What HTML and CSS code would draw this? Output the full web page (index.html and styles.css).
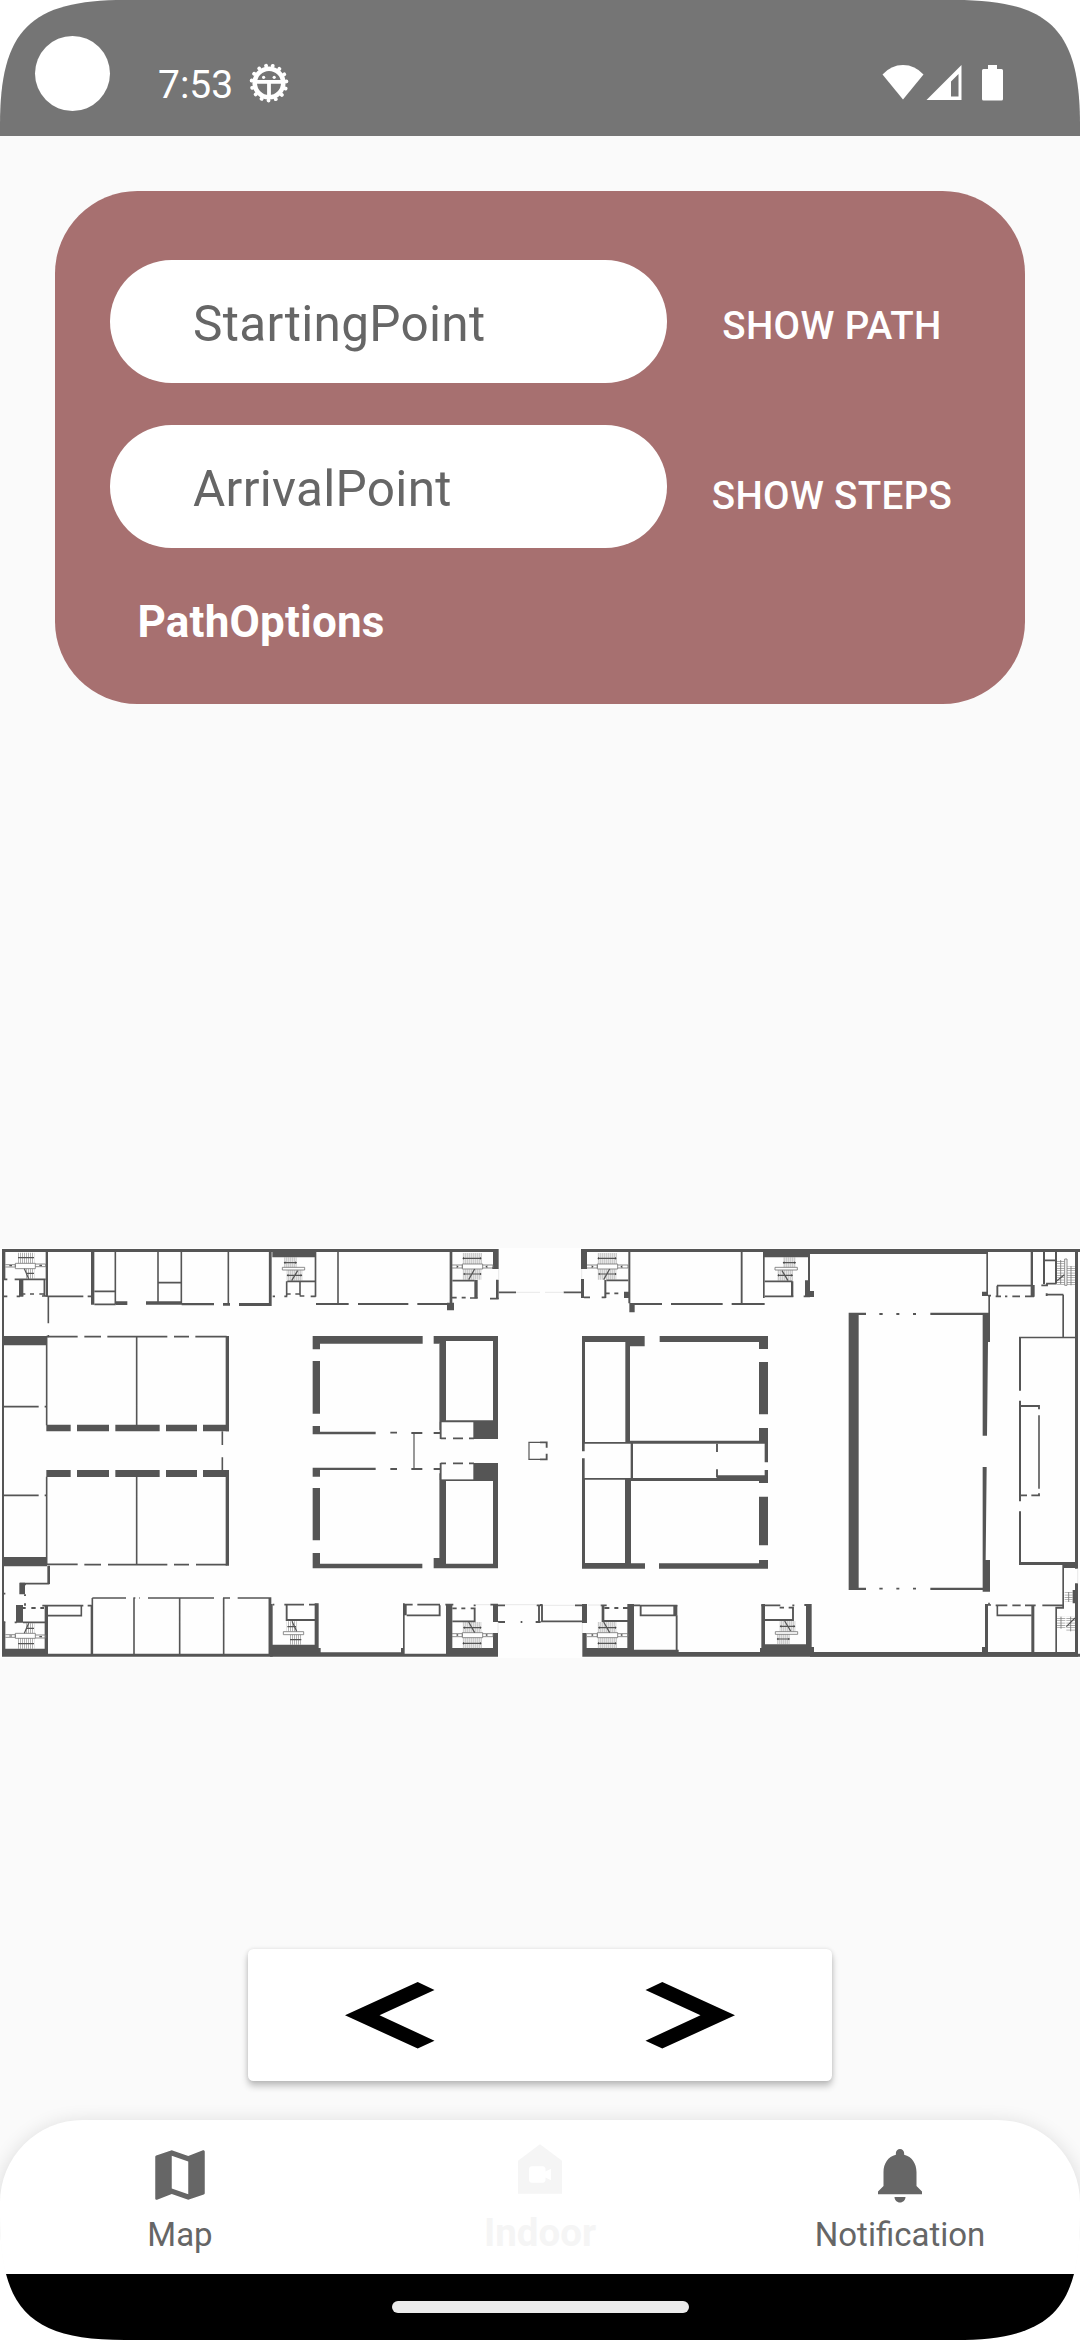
FILE: index.html
```html
<!DOCTYPE html>
<html lang="en">
<head>
<meta charset="utf-8">
<title>Indoor navigation</title>
<link rel="stylesheet" href="styles.css">
</head>
<body>
<div class="screen">
  <header class="status">
    <span class="camera"></span>
    <span class="clock">7:53</span>
    <svg class="debug" viewBox="0 0 40 40">
      <circle cx="20" cy="20" r="14.300" fill="none" stroke="#fff" stroke-width="4.600"/>
      <circle cx="20" cy="20" r="17.500" fill="none" stroke="#fff" stroke-width="3.800" stroke-linecap="round" stroke-dasharray="0.100 7.230" transform="rotate(-78 20 20)"/>
      <path d="M8 18.800H32M20 19V34" stroke="#fff" stroke-width="3.800"/>
      <circle cx="14.600" cy="14.300" r="1.600" fill="#fff"/><circle cx="25.200" cy="14.300" r="1.600" fill="#fff"/>
    </svg>
    <svg class="signals" viewBox="0 0 121 36">
      <path d="M.5 9.500Q9 0 21 0T41.500 9.500L21 34.500z"/>
      <path fill-rule="evenodd" d="M44.500 35L79.500 0V35zM69 16.500V31.500H76.500V9z"/>
      <path d="M106 4V0h9v4h4.500q1.500 0 1.500 1.500V34q0 1.500-1.500 1.500h-18q-1.500 0-1.500-1.500V5.500q0-1.500 1.500-1.500z"/>
    </svg>
  </header>

  <main class="content">
    <section class="planner">
      <div class="row">
        <div class="field">StartingPoint</div>
        <div class="action">SHOW PATH</div>
      </div>
      <div class="row">
        <div class="field">ArrivalPoint</div>
        <div class="action steps">SHOW STEPS</div>
      </div>
      <div class="options">PathOptions</div>
    </section>

    <svg class="plan" viewBox="0 24 3240 1230">
      <defs>
        <pattern id="hatch" width="6" height="40" patternUnits="userSpaceOnUse"><path d="M1 0V40" stroke="#777" stroke-width="2"/></pattern>
        <pattern id="treads" width="40" height="7" patternUnits="userSpaceOnUse"><path d="M0 1H40" stroke="#777" stroke-width="2"/></pattern>
        <g id="stairs">
          <path d="M0-40H58V-7H0zM0 9H56V40H0z" fill="url(#hatch)"/>
          <path d="M-1-7H60V8H-1zM-32-4H-1V5H-32M60-4H91V5H60" class="l2"/>
          <path d="M2-24H54M4 23H54M18 40L36 8" class="l3"/>
          <path d="M-18-3l6 4-6 4zM74-3l-6 4 6 4zM4-28l-5 4 5 4zM52-28l5 4-5 4zM6 19l-5 4 5 4zM52 19l5 4-5 4z" fill="#444"/>
        </g>
        <g id="stairs2">
          <path d="M5-34H43V-4H5zM13 4H60V36H13z" fill="url(#hatch)"/>
          <path d="M0-4H67V4H0z" class="l2"/>
          <path d="M6-18H42M15 20H58M28 36L46 6" class="l3"/>
          <path d="M9-22l-5 4 5 4zM39-22l5 4-5 4zM18 16l-5 4 5 4zM55 16l5 4-5 4z" fill="#444"/>
        </g>
      </defs>
      <rect y="24" width="3240" height="1230" fill="#fefefe"/>

      <!-- West wing -->
      <g>
        <path class="f" d="M6 27H1496V36H6zM6 27H12V1250H6zM6 1241H1494V1250H6zM11 288H141V316H11zM11 951H141V979H11zM11 1226H141V1242H11z"/>
        <path class="f" d="M137 36H144V170H137zM11 36H16V118H11zM57 118H70V168H57zM273 36H283V194H273zM347 184H382V195H347zM438 184H545V194H438zM545 189H642V196H545zM669 189H690V197H669zM717 189H812V198H717z"/>
        <path class="f" d="M139 554H212V574H139zM231 554H327V574H231zM346 554H479V574H346zM498 554H591V574H498zM609 554H687V574H609zM139 690H212V711H139zM231 690H327V711H231zM346 690H479V711H346zM498 690H591V711H498zM609 690H687V711H609z"/>
        <path class="f" d="M677 288H687V574H677zM677 690H687V977H677zM142 977H150V1032H142zM58 1028H75V1063H58zM48 1095H69V1148H48zM134 1095H144V1242H134zM11 1146H16V1242H11zM272 1095H278V1242H272z"/>
        <path class="l4" d="M57 118H137M133 118V168M60 168H70M90 162H102M64 162H76M118 162H132M126 168H144M144 169H250M263 169H275M145 169V250M145 285V292M11 169H22M50 169H60M11 118H22M44 118H57M283 154H347M283 193H347M346 36V193M474 36V186M474 128H544M544 36V190M685 36V190M809 36V192"/>
        <path class="l4" d="M139 290H233M253 290H303M322 290H502M522 290H567M586 290H680M140 290V556M410 290V556M11 500H116M134 500H140M11 766H116M134 766H140M140 710V974M410 710V974M667 574V615M667 652V690"/>
        <path class="l5" d="M139 973H233M253 974H303M324 974H502M522 974H567M588 974H680M60 1031H148M75 1031V1036M75 1063V1068M75 1090V1097M11 1061H16M69 1104H77M94 1104H107M121 1104H132M127 1097H250M263 1097H275M69 1147H137M44 1147H50"/>
        <path class="l4" d="M144 1127H244V1097M277 1074H378M277 1074V1242M400 1074H406M418 1074H420M444 1074H642M402 1074V1242M539 1074V1242M669 1074H690M671 1074V1242M713 1074H810M808 1074V1242M11 1146H16"/>
        <path d="M52 38H103V70H52zM75 86H103V116H75zM78 1150H103V1180H78zM52 1195H103V1226H52z" fill="url(#hatch)"/>
        <path class="l2" d="M46 70H106V86H46zM46 1180H106V1195H46zM16 74H46V81H16M106 72H137V80H106M16 1184H46V1192H16M106 1185H137V1194H106"/>
        <path class="l3" d="M54 53H102M80 100H102M73 86L86 116M54 1211H102M80 1165H102M73 1180L86 1150M28 77H36M118 76H126M28 1188H36M118 1190H126"/>
      </g>

      <!-- Centre-west block -->
      <g transform="translate(810)">
        <path class="f" d="M0 27H5V198H0zM7 36H137V52H7zM134 36H139V170H134zM539 36H547V190H539zM531 188H552V211H531zM669 36H686V87H669zM678 119H686V177H678zM613 120H623V175H613z"/>
        <path class="f" d="M128 288H458V311H150V328H128zM128 363H150V521H128zM128 558H150V575H317V583H128zM128 683H317V690H150V710H128zM128 744H150V901H128zM128 939H150V971H457V985H128z"/>
        <path class="f" fill-rule="evenodd" d="M491 288H684V597H610V545H510V311H491zM528 303H669V541H528z"/>
        <path class="f" fill-rule="evenodd" d="M610 669H684V985H491V954H510V719H610zM528 723H669V971H528z"/>
        <path class="f" d="M0 1072H4V1092H8V1250H0zM8 1214H134V1242H8zM134 1090H146V1224H152V1237H393V1224H399V1090H404V1242H134zM404 1092H410V1126H404zM528 1092H547V1242H528zM547 1224H684V1242H547zM669 1092H684V1146H669zM669 1179H684V1242H669z"/>
        <path class="l4" d="M52 124H136M50 124V168M90 124V166M8 169H15M43 169H52M52 162H62M76 162H90M89 168H103M122 169H137M547 122H614M669 80V87M545 173H560M575 173H587M600 174H623M660 176H686M204 36V190M686 157H738"/>
        <path class="l5" d="M138 192H236M264 192H415M442 192H540M361 578H381M424 579H457M491 579H512M361 687H381M424 687H457M491 687H512M512 545V597M512 669V720M512 595H528M549 595H579M597 595H612M512 670H528M549 670H579M597 670H612"/>
        <path class="l3" d="M432 580V687M510 311V570M510 700V960M777 606V658M775 607H810M775 658H810M510 545H612M510 720H612"/>
        <path class="l5" d="M43 1094H102M117 1094H142M50 1094V1140H136M8 1094H13M400 1094H428M442 1094H510M410 1126H509V1096M526 1094H550M547 1105H560M574 1105H586M602 1105H614V1144H547M611 1096H617M661 1094H684M684 1146H705M684 1096H705M752 1146H757M800 1096H812M807 1096V1146M797 1146H812"/>
        <path class="faint" d="M686 87V119M738 157H810M617 1094H661M684 1146V1179M705 1094H800"/>
        <use href="#stairs" x="578" y="79"/><use href="#stairs2" x="37" y="86"/><use href="#stairs" transform="matrix(1 0 0 -1 578 1186)"/>
        <path d="M50 1144H80V1174H50zM57 1184H96V1214H57z" fill="url(#hatch)"/><path class="l2" d="M40 1175H101V1184H40z"/><path class="l3" d="M52 1160H78M60 1199H94M66 1144L80 1174"/>
      </g>

      <!-- Centre-east block -->
      <g transform="translate(1620)">
        <path class="f" d="M123 27H1620V36H123zM123 27H141V87H123zM123 117H132V174H123zM265 36H271V190H265zM268 190H284V217H268zM193 120H199V174H193zM252 155H268V174H252zM669 36H674V174H669zM674 36H804V52H674zM753 124H760V170H753zM804 36H810V171H795V121H804z"/>
        <path class="f" d="M126 288H314V319H270V602H657V564H684V667H674V611H279V714H530V706H657V706H684V729H657V723H273V970H315V986H126V655H134V714H272V611H134V634H126zM359 288H684V327H657V306H359zM657 366H684V523H657zM657 770H684V916H657zM357 970H657V960H684V986H357z"/>
        <path fill="#fefefe" d="M135 306H256V606H135zM135 719H255V969H135z"/>
        <path class="f" d="M674 690H684V710H674zM126 1092H141V1149H126zM127 1179H140V1250H127zM127 1241H1620V1250H127zM140 1224H268V1242H140zM262 1092H282V1242H262zM280 1229H416V1242H280zM400 1095H412V1126H400zM416 1236H660V1224H664V1092H675V1242H416zM675 1213H804V1242H675zM798 1092H810V1242H798zM185 1098H193V1146H185z"/>
        <path class="l5" d="M199 121H265M197 160H209M223 160H235M132 172H150M185 172H197M71 157H126M270 192H366M393 192H548M575 192H674M605 36V192M674 124H757M674 169H760M791 169H810M531 611V636M531 688V712M0 607H20V623M0 658H20V641"/>
        <path class="l5" d="M0 1095H8M6 1095V1144H127M105 1096H127M182 1096H200M193 1104H208M223 1104H235M249 1104H264M190 1143H264M282 1096H300M302 1098V1126H410M300 1097H412M410 1126V1230M664 1096H721M719 1103H732M746 1103H759V1140H675M757 1096H763M793 1095H810"/>
        <path class="faint" d="M125 87V117M15 157H71M10 1096H105M127 1149V1179M144 1095H184"/>
        <use href="#stairs" x="173" y="79"/><use href="#stairs" transform="matrix(1 0 0 -1 173 1186)"/><use href="#stairs2" transform="matrix(-1 0 0 1 772 86)"/><use href="#stairs2" transform="matrix(1 0 0 -1 706 1179)"/>
      </g>

      <!-- East hall -->
      <g transform="translate(2430)">
        <path class="f" d="M0 27H804V36H534V42H0zM795 27H804V986H795zM795 1030H804V1250H795zM0 153H12V171H0zM0 1092H5V1221H12V1250H0zM0 1236H804V1250H0zM516 155H534V168H516zM529 36H534V168H529zM116 218H168V225H146V1043H168V1050H116zM361 218H535V168H540V306H534L531 587H518V225H361zM518 681H530L527 960H540V1055H518V1050H361V1043H518zM525 1092H534V1242H516V1221H525z"/>
        <path class="f" d="M662 36H669V135H674V170H662zM699 36H705V132H699zM735 36H741V130H735zM757 164H762V292H757zM627 290H797V295H633V452H627zM627 482H633V784H627zM627 814H633V966H804V984H762V1106H737V1100H757V975H627zM664 1096H673V1238H664zM736 1100H741V1238H736zM788 1050H796V1090H788z"/>
        <path class="l5" d="M208 222H218M259 222H268M309 222H318M208 1046H218M259 1046H268M309 1046H318M561 137H665M562 137V168M534 167H543M557 169H573M585 169H592M607 169H630M645 169H672M694 136H711V131H740M708 164H760M710 160V168M700 61H738M633 498H687V508M633 766H651M664 766H687V760"/>
        <path class="l4" d="M687 526V746M534 1095H543M557 1096H592M607 1096H632M645 1096H677M697 1096H760M562 1098V1126H665M537 1088V1096"/>
        <path d="M741 60H763V136H741zM771 78H795V136H771zM764 1056H788V1086H764zM741 1130H766V1166H741zM769 1130H795V1174H769z" fill="url(#treads)"/>
        <path class="l2" d="M764 57H771V136H764zM752 60V132M783 78V136M776 1056V1086M753 1130V1166M782 1130V1174"/><path class="l3" d="M741 122L763 104M769 1160L795 1134"/>
        <path class="faint" d="M803 986V1030"/>
      </g>
    </svg>

    <div class="pager">
      <svg viewBox="0 0 90 67"><path d="M0 33.300L72.700 0 89.500 8 34.500 33.300 89.500 58.700 72.700 66.500z"/></svg>
      <svg viewBox="0 0 90 67"><path d="M90 33.300L17.300 0 .5 8 55.500 33.300 .5 58.700 17.300 66.500z"/></svg>
    </div>
  </main>

  <nav class="tabs">
    <div class="tab">
      <svg viewBox="0 0 24 24"><path d="M20.500,3l-0.160,0.030L15,5.100 9,3 3.360,4.900c-0.210,0.070 -0.360,0.250 -0.360,0.480L3,20.500c0,0.280 0.220,0.500 0.500,0.500l0.160,-0.030L9,18.900l6,2.100 5.640,-1.900c0.210,-0.070 0.360,-0.250 0.360,-0.480L21,3.500c0,-0.280 -0.220,-0.500 -0.500,-0.500zM15,19l-6,-2.110L9,5l6,2.110L15,19z"/></svg>
      <span>Map</span>
    </div>
    <div class="tab active">
      <svg viewBox="0 0 24 24"><path fill-rule="evenodd" d="M12 3L4 9v12h16V9zM16 16.060l-2-1V16c0 .55-.45 1-1 1H9c-.55 0-1-.45-1-1v-4c0-.55.45-1 1-1h4c.55 0 1 .45 1 1v.94l2-1z"/></svg>
      <span>Indoor</span>
    </div>
    <div class="tab">
      <svg viewBox="0 0 24 24"><path d="M12,22c1.100,0 2,-0.900 2,-2h-4c0,1.100 0.890,2 2,2zM18,16v-5c0,-3.070 -1.640,-5.640 -4.500,-6.320L13.500,4c0,-0.830 -0.670,-1.500 -1.500,-1.500s-1.500,0.670 -1.500,1.500v0.680C7.630,5.360 6,7.920 6,11v5l-2,2v1h16v-1l-2,-2z"/></svg>
      <span>Notification</span>
    </div>
  </nav>
  <footer class="gesture"><span></span></footer>
</div>
</body>
</html>
```

FILE: styles.css
```css
* { box-sizing: border-box; }
body { margin: 0; background: #fff; font-family: Roboto, sans-serif; }
.screen {
  width: 1080px; height: 2340px; display: flex; flex-direction: column;
  background: #fafafa; overflow: hidden;
  clip-path: path("M0 125C0 30 30 0 125 0H955C1050 0 1080 30 1080 125V2215C1080 2310 1050 2340 955 2340H125C30 2340 0 2310 0 2215Z");
}
.status { height: 136px; flex: none; display: flex; align-items: flex-start; background: #757575; color: #fff; }
.camera { width: 75px; height: 75px; margin: 36px 0 0 35px; border-radius: 50%; background: #fff; }
.clock { margin: 62px 0 0 48px; font-size: 39px; line-height: 46px; width: 75px; }
.debug { width: 40px; height: 40px; margin: 63px 0 0 16px; }
.signals { width: 121px; height: 36px; margin: 65px 77px 0 auto; fill: #fff; }

.content { flex: 1; min-height: 0; display: flex; flex-direction: column; align-items: center; padding-top: 55px; }
.planner {
  width: 970px; height: 513px; flex: none; padding: 69px 55px 0; display: flex; flex-direction: column; gap: 42px;
  background: #a77070; border-radius: 82.5px; color: #fff;
}
.row { display: flex; height: 123px; }
.field { width: 557px; padding-left: 83px; border-radius: 61.5px; background: #fff; color: #666; font-size: 49.5px; line-height: 128px; letter-spacing: .3px; }
.action { flex: 1; margin-right: -27px; text-align: center; font-size: 38.5px; font-weight: 500; line-height: 131px; letter-spacing: .35px; white-space: nowrap; }
.action.steps { line-height: 141px; }
.options { padding-left: 27.5px; font-size: 44px; font-weight: 700; line-height: 52px; margin-top: 6px; letter-spacing: .2px; }

.plan { width: 1080px; height: 410px; flex: none; margin-top: 544px; display: block; }
.f { fill: #555; }
.l2, .l3, .l4, .l5 { fill: none; stroke: #555; }
.l2 { stroke: #777; stroke-width: 2.5; }
.l3 { stroke-width: 3.6; }
.l4 { stroke-width: 4.8; }
.l5 { stroke-width: 5.6; }
.faint { fill: none; stroke: #ddd; stroke-width: 2; }

.pager {
  width: 584px; height: 132px; flex: none; margin-top: 291px; padding: 0 97px; display: flex; align-items: center; justify-content: space-between;
  background: #fff; border-radius: 5.5px; box-shadow: 0 5px 7px rgba(0,0,0,.24), 0 0 4px rgba(0,0,0,.1);
}
.pager svg { width: 90px; height: 67px; }

.tabs {
  height: 154px; flex: none; display: flex; background: #fff; border-radius: 82.5px 82.5px 0 0;
  box-shadow: 0 3px 20px rgba(0,0,0,.14); color: #666;
}
.tab { flex: 1; display: flex; flex-direction: column; align-items: center; padding-top: 22px; font-size: 33px; line-height: 38px; }
.tab svg { width: 66px; height: 66px; fill: currentColor; }
.tab span { margin-top: 8px; }
.tab.active { padding-top: 16px; color: #f5f5f5; font-size: 38.5px; font-weight: 700; line-height: 45px; }
.gesture { height: 66px; flex: none; display: flex; justify-content: center; align-items: flex-start; padding-top: 27px; background: #000; }
.gesture span { width: 297px; height: 12px; border-radius: 6px; background: #ebebeb; }
```
